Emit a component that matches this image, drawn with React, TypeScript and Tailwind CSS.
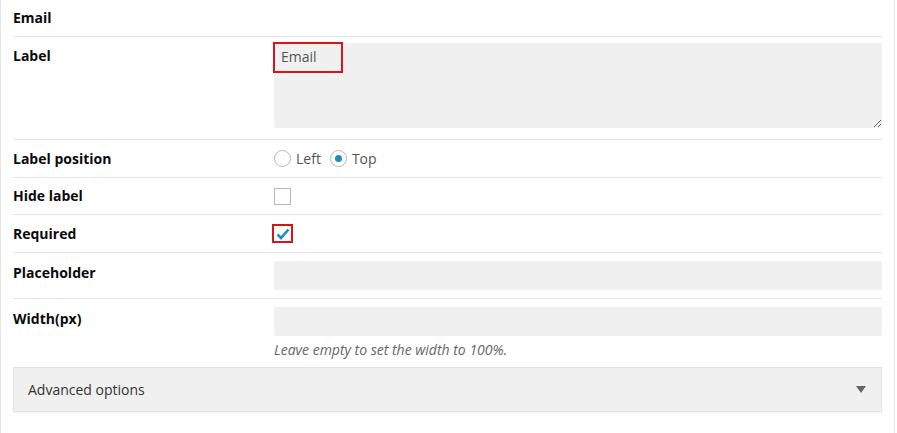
import React from "react";

const font = { fontFamily: '"Open Sans", "Noto Sans", Arial, sans-serif' };

function Row({
  label,
  children,
  className = "",
  labelClass = "pt-[9px]",
}: {
  label: string;
  children?: React.ReactNode;
  className?: string;
  labelClass?: string;
}) {
  return (
    <div className={"flex border-b border-[#e5e5e5] " + className}>
      <div className={"w-[261px] shrink-0 text-[14px] font-bold leading-[20px] text-[#0a0a0a] " + labelClass}>{label}</div>
      <div className="flex-1 min-w-0">{children}</div>
    </div>
  );
}

function Radio({ checked, label }: { checked?: boolean; label: string }) {
  return (
    <label className="flex items-center gap-[5px] text-[14px] text-[#555]">
      <span className="flex h-[17px] w-[17px] items-center justify-center rounded-full border border-[#b4b9be] bg-white">
        {checked && <span className="h-[7px] w-[7px] rounded-full bg-[#1e8cbe]" />}
      </span>
      {label}
    </label>
  );
}

export default function App() {
  return (
    <div style={font} className="h-[433px] w-[895px] border-x border-[#e5e5e5] bg-white pl-[12px] pr-[12px]">
      {/* field title */}
      <div className="flex h-[37px] items-center border-b border-[#e5e5e5] pb-[1px] text-[14px] font-bold text-[#0a0a0a]">
        Email
      </div>

      <Row label="Label" className="pt-[6px] pb-[11px]" labelClass="pt-[3px]">
        <div className="relative">
          <textarea
            readOnly
            defaultValue="Email"
            className="block h-[85px] w-full resize rounded-[2px] bg-[#f0f0f0] px-[7px] py-[4px] text-[14px] leading-[20px] text-[#555] outline-none"
          />
          <span className="pointer-events-none absolute left-[-1px] top-[-1px] h-[31px] w-[70px] border-2 border-[#d9121b]" />
        </div>
      </Row>

      <Row label="Label position" className="h-[38px] items-center" labelClass="">
        <div className="flex items-center gap-[9px]">
          <Radio label="Left" />
          <Radio label="Top" checked />
        </div>
      </Row>

      <Row label="Hide label" className="h-[37px] items-center" labelClass="">
        <span className="mt-[1px] block h-[17px] w-[17px] border border-[#b4b9be] bg-white" />
      </Row>

      <Row label="Required" className="h-[38px] items-center" labelClass="">
        <span className="ml-[-2px] flex h-[19px] w-[21px] items-center justify-center border-2 border-[#d9121b] bg-white">
          <svg width="14" height="12" viewBox="0 0 14 12">
            <path d="M1.5 6.5 L5 10 L12.5 1.5" fill="none" stroke="#1e8cbe" strokeWidth="2.6" />
          </svg>
        </span>
      </Row>

      <Row label="Placeholder" className="pt-[8px] pb-[8px]" labelClass="pt-[2px]">
        <input className="block h-[29px] w-[608px] rounded-[2px] bg-[#f0f0f0] px-2 outline-none" />
      </Row>

      <div className="flex pt-[8px]">
        <div className="w-[261px] shrink-0 pt-[2px] text-[14px] font-bold leading-[20px] text-[#0a0a0a]">Width(px)</div>
        <div className="flex-1 min-w-0">
          <input className="block h-[29px] w-[608px] rounded-[2px] bg-[#f0f0f0] px-2 outline-none" />
          <p className="mt-[4px] text-[14px] italic leading-[20px] text-[#666]">Leave empty to set the width to 100%.</p>
        </div>
      </div>

      <div className="mt-[7px] flex h-[45px] items-center justify-between border border-[#e2e2e2] bg-[#f0f0f0] pl-[14px] pr-[15px] shadow-[0_1px_1px_rgba(0,0,0,0.04)]">
        <span className="text-[14px] text-[#333]">Advanced options</span>
        <svg width="10" height="7" viewBox="0 0 10 7">
          <path d="M0 0 H10 L5 7 Z" fill="#666" />
        </svg>
      </div>
    </div>
  );
}
